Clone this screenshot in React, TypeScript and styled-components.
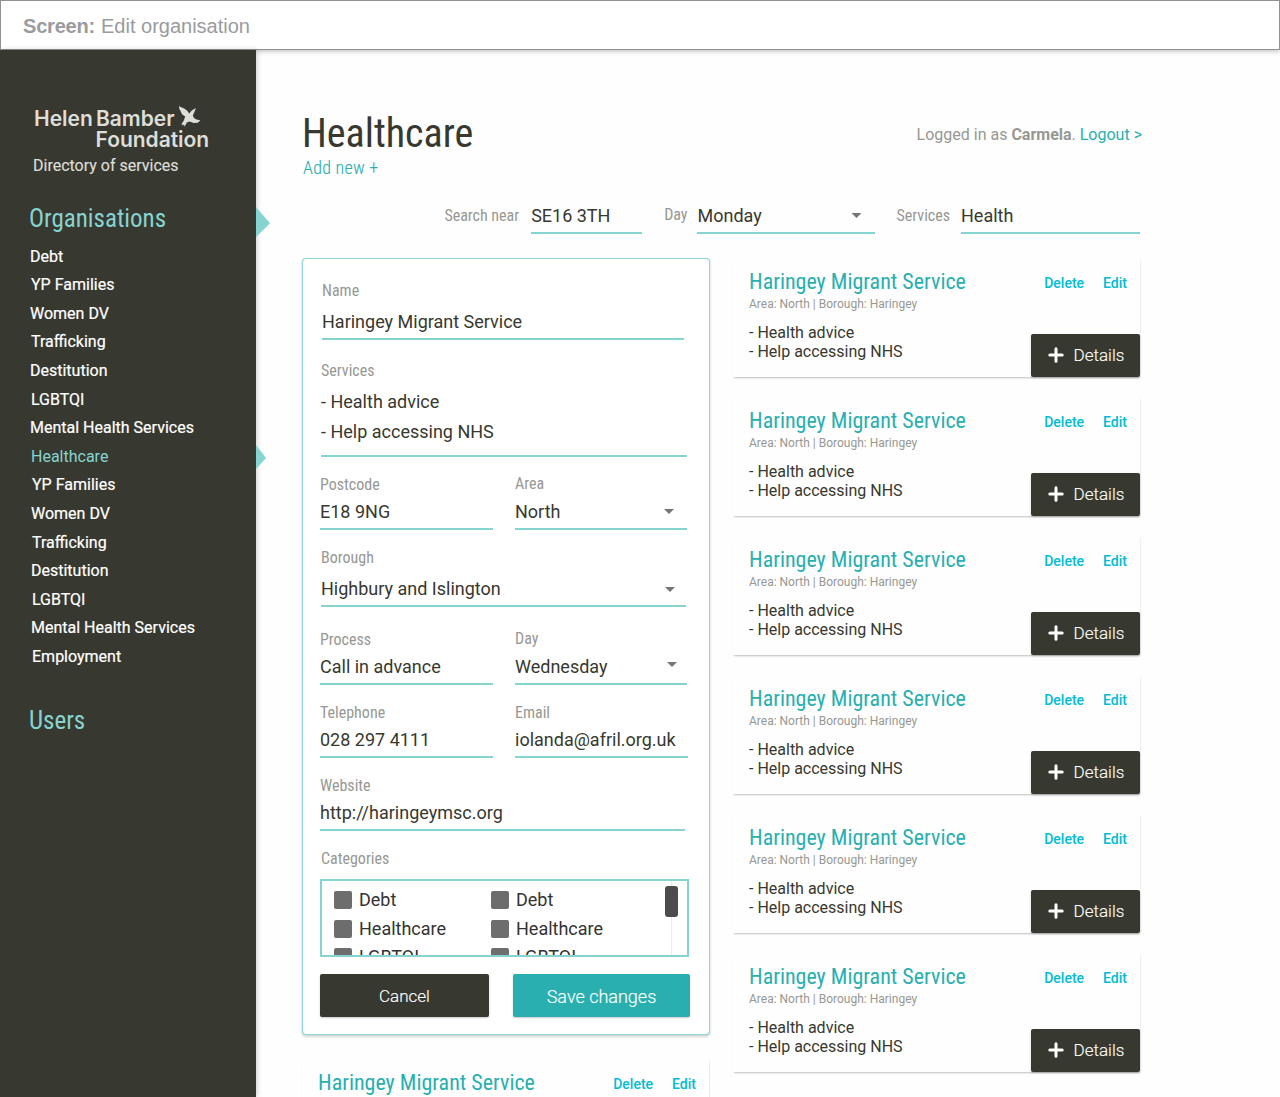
import React from "react";
import styled, { createGlobalStyle, css } from "styled-components";

const color = {
  dark: "#37382f",
  ink: "#37382f",
  teal: "#29afb0",
  aqua: "#86d4d1",
  label: "#979893",
  link: "#00bcd4",
};

const condensed = css`
  font-family: Roboto, "Liberation Sans", sans-serif;
  font-stretch: 75%;
`;

const GlobalStyle = createGlobalStyle`
  * { box-sizing: border-box; }
  body {
    margin: 0;
    background: #fefefe;
    color: ${color.ink};
    font-family: Roboto, "Liberation Sans", sans-serif;
  }
  h1, h2, h3, p, ul { margin: 0; padding: 0; font-weight: 400; }
  ul { list-style: none; }
`;

const Page = styled.div`
  height: 1097px;
  overflow: hidden;
  display: flex;
  flex-direction: column;
`;

const TopBar = styled.header`
  flex: none;
  height: 50px;
  padding: 3px 22px 0;
  display: flex;
  align-items: center;
  gap: 6px;
  background: #fff;
  border: 1px solid #8f9193;
  box-shadow: 0 1px 5px rgba(0, 0, 0, 0.28);
  color: #999b9e;
  font: 20px "Liberation Sans", Arial, sans-serif;
  b { letter-spacing: -0.2px; }
`;

const Body = styled.div`
  flex: 1;
  min-height: 0;
  display: flex;
`;

const Sidebar = styled.aside`
  position: relative;
  z-index: 1;
  flex: none;
  width: 256px;
  padding: 58px 29px 0;
  background: ${color.dark};
  box-shadow: 1px 0 5px rgba(0, 0, 0, 0.2);
`;

const Logo = styled.div`
  position: relative;
  width: 180px;
  padding-left: 5px;
  color: #deded9;
  font: 600 21px/21px Inter, "Liberation Sans", sans-serif;
  letter-spacing: -0.02px;
  word-spacing: -2px;
  svg {
    position: absolute;
    left: 149px;
    top: -4px;
  }
`;

const LogoLine = styled.div<{ $indent?: boolean }>`
  height: ${(p) => (p.$indent ? 22 : 21)}px;
  padding-left: ${(p) => (p.$indent ? 61.5 : 0)}px;
  white-space: nowrap;
`;

const Tagline = styled.p`
  padding: 4px 0 0 4px;
  color: #deded9;
  font-size: 16px;
  line-height: 22px;
  -webkit-text-stroke: 0.15px currentColor;
`;

const NavHeading = styled.h2<{ $top: number }>`
  ${condensed}
  margin-top: ${(p) => p.$top}px;
  color: ${color.aqua};
  font-size: 25px;
  line-height: 30px;
`;

const NavItem = styled.li<{ $active?: boolean; $inset: number }>`
  padding-left: ${(p) => p.$inset}px;
  color: ${(p) => (p.$active ? color.aqua : "#fff")};
  font-size: 16px;
  line-height: 28.6px;
  -webkit-text-stroke: ${(p) => (p.$active ? 0 : 0.2)}px currentColor;
`;

const NavList = styled.ul`
  padding-top: 8.6px;
`;

const Pointer = styled.i<{ $top: number; $w: number; $h: number }>`
  position: absolute;
  left: 256px;
  top: ${(p) => p.$top}px;
  width: ${(p) => p.$w}px;
  height: ${(p) => p.$h}px;
  background: ${color.aqua};
  clip-path: polygon(0 0, 100% 54%, 0 100%);
`;

const Main = styled.main`
  width: 884px;
  padding: 60px 0 0 46px;
`;

const Heading = styled.div`
  display: flex;
  justify-content: space-between;
  align-items: flex-start;
  height: 71px;
`;

const Title = styled.h1`
  ${condensed}
  font-size: 40px;
  line-height: 48px;
`;

const AddNew = styled.a`
  ${condensed}
  display: block;
  margin-top: -1px;
  padding-left: 1px;
  color: ${color.teal};
  font-size: 18px;
  font-weight: 300;
  line-height: 22px;
  letter-spacing: 0.25px;
  -webkit-text-stroke: 0.1px currentColor;
`;

const Session = styled.p`
  margin: 14px -2px 0 0;
  color: ${color.label};
  font-size: 16px;
  line-height: 22px;
  b { font-weight: 700; }
  a { color: ${color.teal}; }
`;

const SearchBar = styled.div`
  display: flex;
  justify-content: flex-end;
  align-items: flex-start;
  height: 53px;
  margin-bottom: 24px;
  padding-top: 21px;
`;

const SearchLabel = styled.label<{ $gap: number; $before?: number; $raise?: boolean }>`
  ${condensed}
  margin: ${(p) => (p.$raise ? 3 : 4)}px ${(p) => p.$gap}px 0 ${(p) => p.$before ?? 21}px;
  color: ${color.label};
  font-size: 16px;
  line-height: 20px;
`;

const Value = styled.div<{ $width?: number; $gap?: number; $lh?: number; $pb?: number }>`
  display: flex;
  justify-content: space-between;
  width: ${(p) => (p.$width ? p.$width + "px" : "auto")};
  margin-top: ${(p) => p.$gap ?? 5}px;
  padding-bottom: ${(p) => p.$pb ?? 4}px;
  border-bottom: 2px solid ${color.aqua};
  font-size: 18px;
  line-height: ${(p) => p.$lh ?? 24}px;
  white-space: pre-line;
`;

const Caret = styled.i<{ $right: number; $top?: number }>`
  flex: none;
  width: 10px;
  height: 5px;
  margin: ${(p) => p.$top ?? 9}px ${(p) => p.$right}px 0 0;
  background: #757575;
  clip-path: polygon(0 0, 100% 0, 50% 100%);
`;

const Columns = styled.div`
  display: grid;
  grid-template-columns: 408px 407px;
  column-gap: 23px;
  align-items: start;
`;

const FormCard = styled.form`
  height: 777px;
  margin-bottom: 25px;
  padding: 22px 17px 0;
  background: #fff;
  border: 1px solid #93d8d5;
  border-radius: 4px;
  box-shadow: 0 2px 3px rgba(0, 0, 0, 0.16), 0 0 1px #93d8d5;
`;

const FormRow = styled.div<{ $top?: number; $width?: number; $left?: number; $second?: number }>`
  display: grid;
  grid-template-columns: ${(p) => (p.$second ? `173px ${p.$second}px` : "1fr")};
  column-gap: 22px;
  width: ${(p) => p.$width ?? 368}px;
  margin: ${(p) => p.$top ?? 18}px 0 0 ${(p) => p.$left ?? 0}px;
`;

const Label = styled.label<{ $raise?: boolean }>`
  ${condensed}
  display: block;
  height: 20px;
  color: ${color.label};
  font-size: 16px;
  line-height: ${(p) => (p.$raise ? 18 : 20)}px;
`;

const CategoryBox = styled.div`
  display: flex;
  justify-content: space-between;
  width: 369px;
  height: 78px;
  margin-top: 10px;
  padding: 5px 9px 0 12px;
  overflow: hidden;
  border: 2px solid ${color.aqua};
`;

const CategoryGrid = styled.div`
  display: grid;
  grid-template-columns: 157px 157px;
  grid-auto-rows: 28.5px;
  align-items: center;
  height: 86px;
`;

const Category = styled.div`
  display: flex;
  align-items: center;
  gap: 7px;
  color: #333;
  font-size: 18px;
  line-height: 28px;
`;

const Box = styled.i`
  width: 18px;
  height: 18px;
  border-radius: 2px;
  background: #6d6d6d;
`;

const ScrollTrack = styled.div`
  width: 13px;
  height: 72px;
  margin-top: -5px;
  padding-top: 5px;
  height: 78px;
  background: linear-gradient(#ececec, #ececec) 6px 0 / 1px 100% no-repeat;
`;

const ScrollThumb = styled.div`
  height: 31px;
  border-radius: 3px;
  background: #4c4c4c;
`;

const Actions = styled.div`
  display: flex;
  gap: 24px;
  margin-top: 17px;
`;

const Button = styled.button<{ $width: number; $primary?: boolean; $pad?: string }>`
  display: flex;
  align-items: center;
  justify-content: center;
  gap: 10px;
  flex: none;
  width: ${(p) => p.$width}px;
  height: 43px;
  padding: ${(p) => p.$pad ?? "0"};
  border: 0;
  border-radius: 2px;
  background: ${(p) => (p.$primary ? color.teal : color.dark)};
  box-shadow: 0 1px 2px rgba(0, 0, 0, 0.22);
  color: #fff;
  font: 300 ${(p) => (p.$primary ? 18 : 17)}px Roboto, sans-serif;
  -webkit-text-stroke: 0.15px currentColor;
`;

const Card = styled.article`
  display: flex;
  justify-content: space-between;
  width: 407px;
  height: 118px;
  margin-bottom: 21px;
  padding-left: 16px;
  box-shadow: 0 2px 2px -1px rgba(0, 0, 0, 0.2), 1px 1px 1px rgba(0, 0, 0, 0.05);
  background: #fefefe;
`;

const CardTitle = styled.h3`
  ${condensed}
  margin-top: 9px;
  color: ${color.teal};
  font-size: 22px;
  line-height: 28px;
`;

const Meta = styled.p`
  color: ${color.label};
  font-size: 12px;
  line-height: 16px;
`;

const Offer = styled.ul`
  padding-top: 11px;
  font-size: 16px;
  line-height: 19px;
`;

const CardSide = styled.div`
  display: flex;
  flex-direction: column;
  justify-content: space-between;
  align-items: flex-end;
`;

const CardLinks = styled.div`
  display: flex;
  gap: 19px;
  padding: 14px 13px 0 0;
  color: ${color.link};
  font-size: 14px;
  font-weight: 500;
  line-height: 20px;
`;

const RightColumn = styled.section`
  padding-top: 1px;
`;

const PlusIcon = () => (
  <svg width="16" height="16" viewBox="0 0 16 16">
    <path d="M8 1.8v12.4M1.8 8h12.4" stroke="#fff" strokeWidth="3" strokeLinecap="round" />
  </svg>
);

const Bird = () => (
  <svg width="24" height="24" viewBox="0 0 24 24">
    <path
      fill="#deded9"
      d="M1 1.4L2 2.7L6.2 4.4L9.2 6.8L11.2 9.6L14 6.2L18 4L16.4 8L14.8 11.4L16 14L18.4 15.6L22.4 16.2L19.8 18.8L15.6 19L11.6 17.6L8.8 18.4L6.6 22.8L6 20.6L4.6 21.8L4.4 20.2L3.2 20.6L5.8 16.4L7.2 12.4L4 10.2L2.8 7.4L1.4 5Z"
    />
  </svg>
);

const ServiceCard = () => (
  <Card>
    <div>
      <CardTitle>Haringey Migrant Service</CardTitle>
      <Meta>Area: North | Borough: Haringey</Meta>
      <Offer>
        <li>- Health advice</li>
        <li>- Help accessing NHS</li>
      </Offer>
    </div>
    <CardSide>
      <CardLinks>
        <a>Delete</a>
        <a>Edit</a>
      </CardLinks>
      <Button $width={109} $pad="0 0 2px 1px">
        <PlusIcon />
        Details
      </Button>
    </CardSide>
  </Card>
);

const navItems = [
  { name: "Debt", inset: 1 },
  { name: "YP Families", inset: 2 },
  { name: "Women DV", inset: 1 },
  { name: "Trafficking", inset: 2 },
  { name: "Destitution", inset: 1 },
  { name: "LGBTQI", inset: 2 },
  { name: "Mental Health Services", inset: 1 },
  { name: "Healthcare", inset: 2, active: true },
  { name: "YP Families", inset: 3 },
  { name: "Women DV", inset: 2 },
  { name: "Trafficking", inset: 3 },
  { name: "Destitution", inset: 2 },
  { name: "LGBTQI", inset: 3 },
  { name: "Mental Health Services", inset: 2 },
  { name: "Employment", inset: 3 },
];

const categories = ["Debt", "Debt", "Healthcare", "Healthcare", "LGBTQI", "LGBTQI"];

export default function App() {
  return (
    <Page>
      <GlobalStyle />
      <TopBar>
        <b>Screen:</b>
        <span>Edit organisation</span>
      </TopBar>
      <Body>
        <Sidebar>
          <Logo>
            <LogoLine>Helen Bamber</LogoLine>
            <LogoLine $indent>Foundation</LogoLine>
            <Bird />
          </Logo>
          <Tagline>Directory of services</Tagline>
          <NavHeading $top={27}>Organisations</NavHeading>
          <NavList>
            {navItems.map((item, i) => (
              <NavItem key={i} $active={item.active} $inset={item.inset}>
                {item.name}
              </NavItem>
            ))}
          </NavList>
          <NavHeading $top={34.4}>Users</NavHeading>
          <Pointer $top={157} $w={14} $h={30} />
          <Pointer $top={395} $w={10} $h={24} />
        </Sidebar>
        <Main>
          <Heading>
            <div>
              <Title>Healthcare</Title>
              <AddNew>Add new +</AddNew>
            </div>
            <Session>
              Logged in as <b>Carmela</b>. <a>Logout &gt;</a>
            </Session>
          </Heading>
          <SearchBar>
            <SearchLabel $gap={12}>Search near</SearchLabel>
            <Value $width={111} $gap={2}>SE16 3TH</Value>
            <SearchLabel $gap={10} $before={22} $raise>Day</SearchLabel>
            <Value $width={178} $gap={2}>
              Monday
              <Caret $right={14} />
            </Value>
            <SearchLabel $gap={11}>Services</SearchLabel>
            <Value $width={179} $gap={2}>Health</Value>
          </SearchBar>
          <Columns>
            <section>
              <FormCard>
                <FormRow $top={0} $width={362} $left={2}>
                  <div>
                    <Label>Name</Label>
                    <Value $gap={9}>Haringey Migrant Service</Value>
                  </div>
                </FormRow>
                <FormRow $top={21} $width={366} $left={1}>
                  <div>
                    <Label>Services</Label>
                    <Value $gap={6} $lh={30} $pb={8}>{"- Health advice\n- Help accessing NHS"}</Value>
                  </div>
                </FormRow>
                <FormRow $second={172}>
                  <div>
                    <Label>Postcode</Label>
                    <Value>E18 9NG</Value>
                  </div>
                  <div>
                    <Label $raise>Area</Label>
                    <Value>
                      North
                      <Caret $right={13} />
                    </Value>
                  </div>
                </FormRow>
                <FormRow $width={365} $left={1}>
                  <div>
                    <Label>Borough</Label>
                    <Value $gap={9}>
                      Highbury and Islington
                      <Caret $right={11} $top={10} />
                    </Value>
                  </div>
                </FormRow>
                <FormRow $top={23} $second={172}>
                  <div>
                    <Label>Process</Label>
                    <Value>Call in advance</Value>
                  </div>
                  <div>
                    <Label $raise>Day</Label>
                    <Value>
                      Wednesday
                      <Caret $right={10} $top={7} />
                    </Value>
                  </div>
                </FormRow>
                <FormRow $second={173}>
                  <div>
                    <Label>Telephone</Label>
                    <Value>028 297 4111</Value>
                  </div>
                  <div>
                    <Label>Email</Label>
                    <Value>iolanda@afril.org.uk</Value>
                  </div>
                </FormRow>
                <FormRow $width={365}>
                  <div>
                    <Label>Website</Label>
                    <Value>http://haringeymsc.org</Value>
                  </div>
                </FormRow>
                <FormRow $left={1}>
                  <Label>Categories</Label>
                </FormRow>
                <CategoryBox>
                  <CategoryGrid>
                    {categories.map((name, i) => (
                      <Category key={i}>
                        <Box />
                        {name}
                      </Category>
                    ))}
                  </CategoryGrid>
                  <ScrollTrack>
                    <ScrollThumb />
                  </ScrollTrack>
                </CategoryBox>
                <Actions>
                  <Button type="button" $width={169}>Cancel</Button>
                  <Button type="button" $width={177} $primary $pad="2px 0 0">Save changes</Button>
                </Actions>
              </FormCard>
              <ServiceCard />
            </section>
            <RightColumn>
              {[0, 1, 2, 3, 4, 5].map((i) => (
                <ServiceCard key={i} />
              ))}
            </RightColumn>
          </Columns>
        </Main>
      </Body>
    </Page>
  );
}
